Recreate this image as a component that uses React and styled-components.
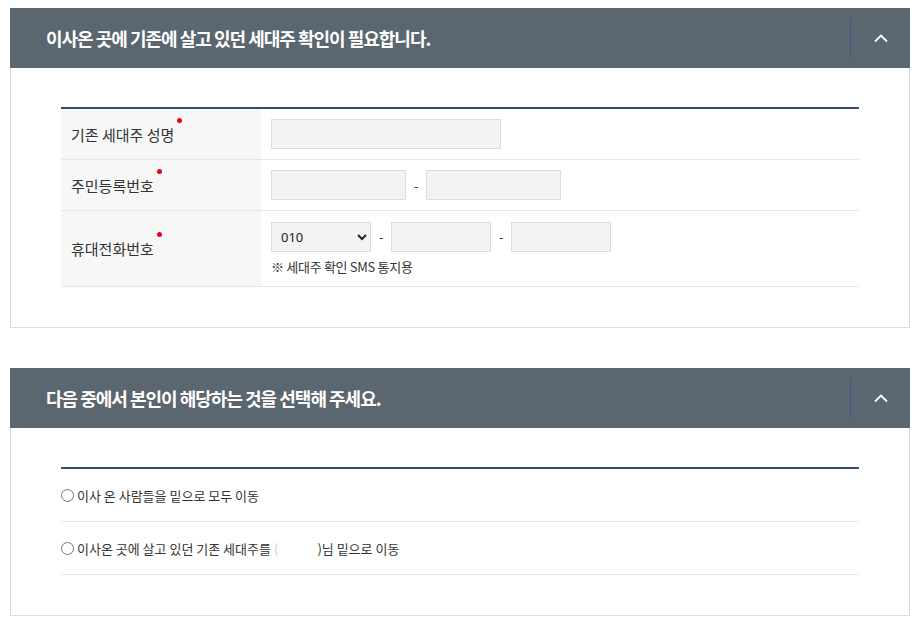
import React from "react";
import styled, { createGlobalStyle } from "styled-components";

const Global = createGlobalStyle`
  body {
    margin: 0;
    background: #fff;
    font-family: "Noto Sans CJK KR", "Noto Sans", sans-serif;
    color: #333;
  }
`;

const Page = styled.div`
  padding: 8px 11px 0 10px;
  display: flex;
  flex-direction: column;
  gap: 40px;
`;

const Section = styled.section`
  border: 1px solid #dcdcdc;
  border-top: none;
`;

const Head = styled.div`
  height: 60px;
  margin: 0 -1px;
  background: #5a6670;
  display: flex;
  align-items: center;
  padding-left: 36px;
`;

const Title = styled.h2`
  flex: 1;
  margin: 0;
  color: #fff;
  font-size: 18px;
  font-weight: 700;
  letter-spacing: -1px;
`;

const Toggle = styled.button`
  width: 60px;
  height: 40px;
  border: none;
  border-left: 1px solid #3f5585;
  background: transparent;
  display: flex;
  align-items: center;
  justify-content: center;
  padding: 0;
  cursor: pointer;
`;

const Body = styled.div`
  padding: 39px 50px ${(p) => p.$bottom || 40}px 50px;
`;

const Table = styled.div`
  border-top: 2px solid #34497a;
`;

const Row = styled.div`
  display: flex;
  border-bottom: 1px solid #e6e6e6;
  min-height: ${(p) => p.$h}px;
`;

const Label = styled.div`
  width: 200px;
  box-sizing: border-box;
  padding-left: 10px;
  background: #f7f7f7;
  display: flex;
  align-items: center;
  font-size: 15px;
  color: #333;
`;

const Dot = styled.span`
  width: 5px;
  height: 5px;
  border-radius: 50%;
  background: #e60012;
  align-self: flex-start;
  margin: -6px 0 0 3px;
`;

const LabelText = styled.span`
  display: inline-flex;
  align-items: center;
`;

const Cell = styled.div`
  flex: 1;
  padding: 10px 10px;
  display: flex;
  flex-direction: column;
  justify-content: center;
  gap: 6px;
`;

const Line = styled.div`
  display: flex;
  align-items: center;
  gap: 8px;
`;

const Input = styled.input`
  width: ${(p) => p.$w}px;
  height: 30px;
  box-sizing: border-box;
  border: 1px solid #dcdcdc;
  background: #f3f3f3;
  font-family: inherit;
  outline: none;
`;

const Select = styled.select`
  width: 100px;
  height: 30px;
  box-sizing: border-box;
  border: 1px solid #dcdcdc;
  background: #f3f3f3;
  padding-left: 5px;
  font-family: "Noto Sans", sans-serif;
  font-size: 13px;
  color: #222;
`;

const Dash = styled.span`
  font-size: 13px;
  color: #333;
  width: 4px;
  text-align: center;
`;

const Note = styled.p`
  margin: 0;
  font-size: 13px;
  line-height: 18px;
  color: #333;
  letter-spacing: -0.3px;
`;

const Option = styled.label`
  display: flex;
  align-items: center;
  height: 52px;
  border-bottom: 1px solid #e6e6e6;
  font-size: 13px;
  color: #333;
  gap: 3px;
`;

const Radio = styled.input`
  margin: 0;
  width: 13px;
  height: 13px;
`;

const Paren = styled.span`
  color: #ccc;
  margin-right: 36px;
`;

function Chevron() {
  return (
    <svg width="16" height="10" viewBox="0 0 16 10">
      <path d="M2 8.5 L8 2.5 L14 8.5" fill="none" stroke="#fff" strokeWidth="1.8" />
    </svg>
  );
}

function Req({ children }) {
  return (
    <Label>
      <LabelText>
        {children}
        <Dot />
      </LabelText>
    </Label>
  );
}

export default function App() {
  return (
    <>
      <Global />
      <Page>
        <Section>
          <Head>
            <Title>이사온 곳에 기존에 살고 있던 세대주 확인이 필요합니다.</Title>
            <Toggle aria-label="접기">
              <Chevron />
            </Toggle>
          </Head>
          <Body>
            <Table>
              <Row $h={50}>
                <Req>기존 세대주 성명</Req>
                <Cell>
                  <Line>
                    <Input $w={230} />
                  </Line>
                </Cell>
              </Row>
              <Row $h={50}>
                <Req>주민등록번호</Req>
                <Cell>
                  <Line>
                    <Input $w={135} />
                    <Dash>-</Dash>
                    <Input $w={135} />
                  </Line>
                </Cell>
              </Row>
              <Row $h={75}>
                <Req>휴대전화번호</Req>
                <Cell>
                  <Line>
                    <Select defaultValue="010">
                      <option>010</option>
                      <option>011</option>
                      <option>016</option>
                      <option>017</option>
                      <option>019</option>
                    </Select>
                    <Dash>-</Dash>
                    <Input $w={100} />
                    <Dash>-</Dash>
                    <Input $w={100} />
                  </Line>
                  <Note>※ 세대주 확인 SMS 통지용</Note>
                </Cell>
              </Row>
            </Table>
          </Body>
        </Section>

        <Section>
          <Head>
            <Title>다음 중에서 본인이 해당하는 것을 선택해 주세요.</Title>
            <Toggle aria-label="접기">
              <Chevron />
            </Toggle>
          </Head>
          <Body $bottom={40}>
            <Table>
              <Option>
                <Radio type="radio" name="move" />
                이사 온 사람들을 밑으로 모두 이동
              </Option>
              <Option>
                <Radio type="radio" name="move" />
                이사온 곳에 살고 있던 기존 세대주를 <Paren>(</Paren>)님 밑으로 이동
              </Option>
            </Table>
          </Body>
        </Section>
      </Page>
    </>
  );
}
